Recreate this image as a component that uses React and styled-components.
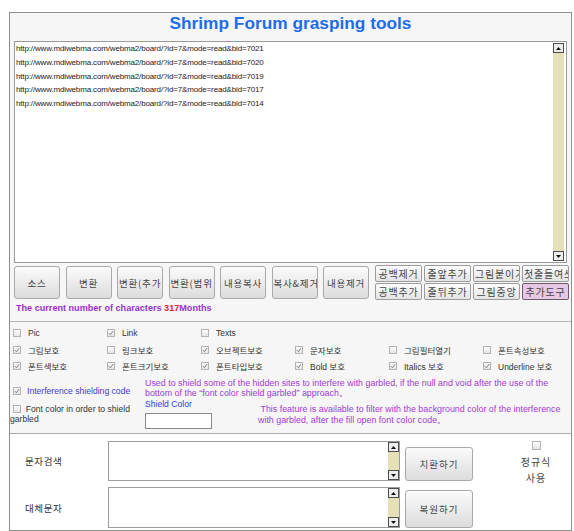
import React from 'react';
import styled, { createGlobalStyle } from 'styled-components';

const Global = createGlobalStyle`
  html, body { margin: 0; padding: 0; background: #fff; }
  body { font-family: "Liberation Sans", "Noto Sans CJK KR", sans-serif; }
`;

const Page = styled.div`
  padding: 12px 0 0 9px;
`;

const Panel = styled.div`
  width: 563px;
  height: 519px;
  box-sizing: border-box;
  border: 1px solid #8f8f8f;
  background: #f6f6f6;
  display: flex;
  flex-direction: column;
  overflow: hidden;
`;

const Title = styled.h1`
  margin: 0;
  height: 28px;
  line-height: 28px;
  text-align: center;
  font: bold 17.3px "Liberation Sans", sans-serif;
  color: #1c6cec;
`;

const TextBox = styled.div`
  margin: 0 4px;
  height: 222px;
  box-sizing: border-box;
  border: 1px solid #9a9a9a;
  background: #fff;
  display: flex;
`;

const UrlText = styled.div`
  flex: 1;
  padding: 0 1px;
  font: 8px "Liberation Sans", sans-serif;
  letter-spacing: -0.15px;
  line-height: 13.75px;
  color: #222;
  white-space: pre;
  overflow: hidden;
`;

const ScrollTrack = styled.div`
  width: 11px;
  flex: none;
  background: #e4e0b8;
  display: flex;
  flex-direction: column;
  justify-content: space-between;
  margin: ${p => p.$m || '0'};
`;

const ArrowBtn = styled.div`
  width: 11px;
  height: 10px;
  box-sizing: border-box;
  border: 1px solid #4c4c4c;
  background: #ededed;
  display: flex;
  align-items: center;
  justify-content: center;
`;

const ButtonRow = styled.div`
  display: flex;
  align-items: center;
  gap: 5.5px;
  margin: 2px 0 0 4px;
  height: 35px;
`;

const BigButton = styled.button`
  width: 46px;
  height: 33px;
  flex: none;
  box-sizing: border-box;
  border: 1px solid #a9a9a9;
  border-radius: 3px;
  background: linear-gradient(#fbfbfb, #dcdcdc);
  font: 9.5px "Noto Sans CJK KR", sans-serif;
  letter-spacing: 0.8px;
  color: #444;
  padding: 0 1px;
  display: flex;
  align-items: center;
  justify-content: safe center;
  white-space: nowrap;
  overflow: hidden;
`;

const SmallGrid = styled.div`
  display: grid;
  grid-template-columns: repeat(4, 47px);
  grid-auto-rows: 17px;
  column-gap: 2px;
  row-gap: 1px;
  margin-left: 0.5px;
`;

const SmallButton = styled.button`
  box-sizing: border-box;
  border: 1px solid ${p => (p.$pink ? '#6a5a6a' : '#9c9c9c')};
  border-radius: 2px;
  background: ${p => (p.$pink ? '#e6c8e6' : 'linear-gradient(#fdfdfd, #e3e3e3)')};
  font: 10px "Noto Sans CJK KR", sans-serif;
  letter-spacing: 0.8px;
  color: #444;
  padding: 0 1px;
  display: flex;
  align-items: center;
  justify-content: safe center;
  white-space: nowrap;
  overflow: hidden;
`;

const Count = styled.div`
  margin: 3px 0 0 6px;
  height: 12px;
  line-height: 12px;
  font: bold 9.1px "Liberation Sans", sans-serif;
  color: #9a30d2;
`;

const Red = styled.span`
  color: #e8262a;
`;

const OptionsSection = styled.div`
  margin-top: 6px;
  border-top: 1px solid #b4b4b4;
  display: flex;
  flex-direction: column;
`;

const CheckGrid = styled.div`
  display: grid;
  grid-template-columns: repeat(6, 94px);
  grid-auto-rows: 16.5px;
  padding: 3px 0 0 3px;
`;

const CheckItem = styled.label`
  display: flex;
  align-items: center;
  gap: 7px;
  font: 8.5px "Liberation Sans", "Noto Sans CJK KR", sans-serif;
  color: #333;
  white-space: nowrap;
`;

const Box = styled.span`
  display: inline-flex;
  align-items: center;
  justify-content: center;
  width: ${p => p.$s || 8}px;
  height: ${p => p.$s || 8}px;
  box-sizing: border-box;
  border: 1px solid #b3b3b3;
  background: linear-gradient(#fdfdfd, #e4e4e4);
  flex: none;
  vertical-align: -1px;
`;

const Check = ({ on, s }) => (
  <Box $s={s}>
    {on && (
      <svg width="6" height="6" viewBox="0 0 6 6">
        <path d="M0.8 3.1 L2.4 4.7 L5.2 1.1" stroke="#7a7a7a" strokeWidth="1" fill="none" />
      </svg>
    )}
  </Box>
);

const ShieldBlock = styled.div`
  display: grid;
  grid-template-columns: 135px 1fr;
  margin-top: 2.5px;
`;

const LeftCol = styled.div`
  display: flex;
  flex-direction: column;
`;

const BlueOption = styled.label`
  display: flex;
  align-items: center;
  gap: 6px;
  padding: 9px 0 0 3px;
  line-height: 10px;
  font: 8.6px "Liberation Sans", sans-serif;
  color: #3b3bd6;
  white-space: nowrap;
`;

const WrapOption = styled.label`
  display: block;
  margin-top: 8px;
  padding-right: 2px;
  text-indent: 3px;
  line-height: 10.5px;
  font: 8.6px "Liberation Sans", sans-serif;
  color: #333;
`;

const RightCol = styled.div`
  display: flex;
  flex-direction: column;
`;

const Purple = styled.p`
  margin: ${p => p.$m || '0'};
  padding: 0;
  font: 8.9px "Liberation Sans", sans-serif;
  line-height: ${p => p.$lh || 10}px;
  color: #a33ad6;
  white-space: nowrap;
`;

const ShieldRow = styled.div`
  display: flex;
  padding-top: 1px;
`;

const ShieldLeft = styled.div`
  display: flex;
  flex-direction: column;
  width: 113px;
`;

const ShieldLabel = styled.div`
  font: 8.6px "Liberation Sans", sans-serif;
  line-height: 10px;
  color: #2f3fd6;
`;

const ColorInput = styled.input`
  margin-top: 4px;
  width: 67px;
  height: 16px;
  box-sizing: border-box;
  border: 1px solid #8a8a8a;
  background: #fff;
  padding: 0;
`;

const SearchSection = styled.div`
  margin-top: auto;
  height: 97px;
  box-sizing: border-box;
  border-top: 1px solid #a9a9a9;
  background: #fff;
  display: grid;
  grid-template-columns: 98px 292px 73px 1fr;
  grid-template-rows: 40px 41px;
  row-gap: 6px;
  padding-top: 7px;
`;

const FieldLabel = styled.div`
  align-self: center;
  padding-left: 15px;
  font: 9.5px "Noto Sans CJK KR", sans-serif;
  letter-spacing: 0.6px;
  color: #333;
`;

const SearchBox = styled.div`
  box-sizing: border-box;
  border: 1px solid #9c9c9c;
  background: #fff;
  display: flex;
  justify-content: flex-end;
`;

const ActionButton = styled.button`
  align-self: end;
  justify-self: end;
  width: 68px;
  height: ${p => p.$h}px;
  box-sizing: border-box;
  border: 1px solid #a9a9a9;
  border-radius: 3px;
  background: linear-gradient(#fbfbfb, #dcdcdc);
  font: 9.5px "Noto Sans CJK KR", sans-serif;
  letter-spacing: 1px;
  color: #444;
  padding: 0;
`;

const RegexCol = styled.div`
  grid-row: 1 / span 2;
  grid-column: 4;
  margin-left: 28px;
  display: flex;
  flex-direction: column;
  align-items: center;
`;

const RegexText = styled.div`
  margin-top: 4px;
  font: 10px "Noto Sans CJK KR", sans-serif;
  letter-spacing: 1px;
  line-height: 16px;
  text-align: center;
  color: #444;
`;

const Arrow = ({ up }) => (
  <ArrowBtn>
    <svg width="5" height="3" viewBox="0 0 5 3">
      <path d={up ? 'M0 3 L2.5 0 L5 3 Z' : 'M0 0 L5 0 L2.5 3 Z'} fill="#111" />
    </svg>
  </ArrowBtn>
);

const Scroll = ({ m }) => (
  <ScrollTrack $m={m}>
    <Arrow up />
    <Arrow />
  </ScrollTrack>
);

const urls = [7021, 7020, 7019, 7017, 7014]
  .map(n => `http://www.mdiwebma.com/webma2/board/?id=7&mode=read&bid=${n}`)
  .join('\n');

const bigButtons = ['소스', '변환', '변환(추가', '변환(범위', '내용복사', '복사&제거', '내용제거'];
const smallButtons = ['공백제거', '줄앞추가', '그림붙이기', '첫줄들여쓰기', '공백추가', '줄뒤추가', '그림중앙', '추가도구'];

const options = [
  ['Pic', false], ['Link', true], ['Texts', false], null, null, null,
  ['그림보호', true], ['링크보호', false], ['오브젝트보호', true], ['문자보호', true], ['그림필터열기', false], ['폰트속성보호', false],
  ['폰트색보호', true], ['폰트크기보호', true], ['폰트타입보호', true], ['Bold 보호', true], ['Italics 보호', true], ['Underline 보호', true],
];

export default function App() {
  return (
    <Page>
      <Global />
      <Panel>
        <Title>Shrimp Forum grasping tools</Title>
        <TextBox>
          <UrlText>{urls}</UrlText>
          <Scroll m="1px 2px 1px 0" />
        </TextBox>
        <ButtonRow>
          {bigButtons.map(b => (
            <BigButton key={b}>{b}</BigButton>
          ))}
          <SmallGrid>
            {smallButtons.map((b, i) => (
              <SmallButton key={b} $pink={i === 7}>{b}</SmallButton>
            ))}
          </SmallGrid>
        </ButtonRow>
        <Count>
          The current number of characters <Red>317</Red>Months
        </Count>
        <OptionsSection>
          <CheckGrid>
            {options.map((o, i) =>
              o ? (
                <CheckItem key={i}>
                  <Check on={o[1]} />
                  {o[0]}
                </CheckItem>
              ) : (
                <span key={i} />
              )
            )}
          </CheckGrid>
          <ShieldBlock>
            <LeftCol>
              <BlueOption>
                <Check on />
                Interference shielding code
              </BlueOption>
              <WrapOption>
                <Check /> &nbsp;Font color in order to shield garbled
              </WrapOption>
            </LeftCol>
            <RightCol>
              <Purple $m="1px 0 0 0">
                Used to shield some of the hidden sites to interfere with garbled, if the null and void after the use of the
                <br />
                bottom of the “font color shield garbled” approach。
              </Purple>
              <ShieldRow>
                <ShieldLeft>
                  <ShieldLabel>Shield Color</ShieldLabel>
                  <ColorInput type="text" />
                </ShieldLeft>
                <Purple $m="4.5px 0 0 0" $lh={11}>
                  &nbsp;This feature is available to filter with the background color of the interference
                  <br />
                  with garbled, after the fill open font color code。
                </Purple>
              </ShieldRow>
            </RightCol>
          </ShieldBlock>
        </OptionsSection>
        <SearchSection>
          <FieldLabel>문자검색</FieldLabel>
          <SearchBox>
            <Scroll />
          </SearchBox>
          <ActionButton $h={34}>치환하기</ActionButton>
          <RegexCol>
            <Check s={9} />
            <RegexText>
              정규식
              <br />
              사용
            </RegexText>
          </RegexCol>
          <FieldLabel>대체문자</FieldLabel>
          <SearchBox>
            <Scroll />
          </SearchBox>
          <ActionButton $h={38}>복원하기</ActionButton>
        </SearchSection>
      </Panel>
    </Page>
  );
}
